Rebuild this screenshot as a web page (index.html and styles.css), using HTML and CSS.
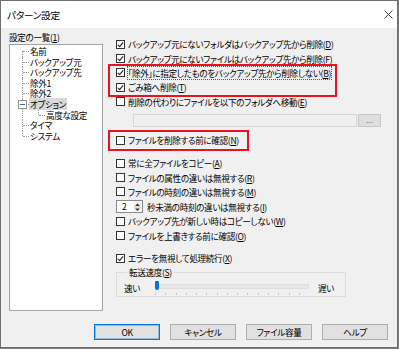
FILE: index.html
```html
<!DOCTYPE html>
<html lang="ja">
<head>
    <meta charset="UTF-8">
    <title>パターン設定</title>
    <link rel="stylesheet" href="styles.css">
</head>
<body>

    <div class="window">
        <div class="titlebar">
            <span class="title">パターン設定</span>
            <svg class="close" width="9" height="9" viewBox="0 0 9 9">
                <path d="M0.5 0.5 L8.5 8.5 M8.5 0.5 L0.5 8.5" stroke="#222" stroke-width="0.9" fill="none"/>
            </svg>
        </div>

        <div class="content">
            <div class="side">
                <div class="side-label">設定の一覧(<u>1</u>)</div>
                <div class="tree">
                    <ul class="tree-root">
                        <li>名前</li>
                        <li>バックアップ元</li>
                        <li>バックアップ先</li>
                        <li>除外1</li>
                        <li>除外2</li>
                        <li class="open">
                            <span class="toggle"></span><span class="selected">オプション</span>
                            <ul>
                                <li>高度な設定</li>
                            </ul>
                        </li>
                        <li>タイマ</li>
                        <li>システム</li>
                    </ul>
                </div>
            </div>

            <div class="options">
                <label class="row"><span class="cb on"></span>バックアップ元にないフォルダはバックアップ先から削除(<u>D</u>)</label>
                <label class="row"><span class="cb on"></span>バックアップ元にないファイルはバックアップ先から削除(<u>F</u>)</label>

                <div class="mark mark-wide">
                    <label class="row"><span class="cb on"></span><span class="focus">「除外」に指定したものをバックアップ先から削除しない(<u>B</u>)</span></label>
                    <label class="row"><span class="cb on"></span>ごみ箱へ削除(<u>T</u>)</label>
                </div>

                <label class="row"><span class="cb"></span>削除の代わりにファイルを以下のフォルダへ移動(<u>E</u>)</label>
                <div class="path-row">
                    <div class="path"></div>
                    <div class="browse">...</div>
                </div>

                <div class="mark mark-short">
                    <label class="row"><span class="cb"></span>ファイルを削除する前に確認(<u>N</u>)</label>
                </div>

                <div class="group-copy">
                    <label class="row"><span class="cb"></span>常に全ファイルをコピー(<u>A</u>)</label>
                    <label class="row"><span class="cb"></span>ファイルの属性の違いは無視する(<u>R</u>)</label>
                    <label class="row"><span class="cb"></span>ファイルの時刻の違いは無視する(<u>M</u>)</label>
                    <div class="row spin-row">
                        <div class="spin">
                            <span class="spin-val">2</span>
                            <span class="spin-btns">
                                <svg width="7" height="12" viewBox="0 0 7 12">
                                    <path d="M1 5 L3.5 2.5 L6 5 Z" fill="#333"/>
                                    <path d="M0 6 H7" stroke="#c8c8c8" stroke-width="1"/>
                                    <path d="M1 7.5 L3.5 10 L6 7.5 Z" fill="#333"/>
                                </svg>
                            </span>
                        </div>
                        <span>秒未満の時刻の違いは無視する(<u>I</u>)</span>
                    </div>
                    <label class="row"><span class="cb"></span>バックアップ先が新しい時はコピーしない(<u>W</u>)</label>
                    <label class="row"><span class="cb"></span>ファイルを上書きする前に確認(<u>O</u>)</label>
                </div>

                <label class="row error-row"><span class="cb on"></span>エラーを無視して処理続行(<u>X</u>)</label>

                <fieldset class="speed">
                    <legend>転送速度(<u>S</u>)</legend>
                    <div class="speed-row">
                        <span class="speed-end">速い</span>
                        <div class="slider">
                            <div class="track"></div>
                            <div class="thumb"></div>
                            <div class="ticks"></div>
                        </div>
                        <span class="speed-end">遅い</span>
                    </div>
                </fieldset>
            </div>
        </div>

        <div class="buttons">
            <button class="btn default">OK</button>
            <button class="btn">キャンセル</button>
            <button class="btn">ファイル容量</button>
            <button class="btn">ヘルプ</button>
        </div>
    </div>

</body>
</html>
```

FILE: styles.css
```css
body {
    margin: 0;
    background-color: #7a7a7a;
    font-family: "Noto Sans CJK JP", "Noto Sans", sans-serif;
    font-size: 8.6px;
    letter-spacing: -0.35px;
    font-feature-settings: "palt";
    color: #000;
}

u {
    text-decoration-thickness: 1px;
    text-underline-offset: 1px;
}

.window {
    width: 398px;
    height: 348px;
    box-sizing: border-box;
    border: 1px solid #6f6f6f;
    background-color: #f0f0f0;
    display: flex;
    flex-direction: column;
}

.titlebar {
    height: 27px;
    background-color: #fff;
    display: flex;
    align-items: center;
    justify-content: space-between;
    padding: 0 4px 0 6px;
    flex: none;
}

.title {
    font-size: 9.6px;
    letter-spacing: -0.2px;
}

.content {
    display: flex;
    gap: 13px;
    padding: 3px 0 0 8px;
}

/* left tree */
.side {
    width: 94px;
    flex: none;
}

.side-label {
    height: 12px;
    line-height: 12px;
    margin-bottom: 1px;
}

.tree {
    height: 267px;
    box-sizing: border-box;
    border: 1px solid #a3a3a3;
    background-color: #fff;
    padding-top: 1px;
}

.tree ul {
    list-style: none;
    margin: 0;
    padding: 0 0 0 12px;
}

.tree li ul {
    padding-left: 8px;
}

.tree li {
    position: relative;
    padding-left: 8px;
    line-height: 10.6px;
    white-space: nowrap;
}

.tree li::before {
    content: "";
    position: absolute;
    left: 0;
    top: 0;
    height: 100%;
    border-left: 1px dotted #9a9a9a;
}

.tree-root > li:first-child::before {
    top: 5px;
    height: calc(100% - 5px);
}

.tree li:last-child::before {
    height: 5.5px;
}

.tree li::after {
    content: "";
    position: absolute;
    left: 1px;
    top: 5px;
    width: 6px;
    border-top: 1px dotted #9a9a9a;
}

.toggle {
    position: absolute;
    left: -4px;
    top: 1px;
    width: 9px;
    height: 9px;
    box-sizing: border-box;
    border: 1px solid #919191;
    background-color: #fff;
    z-index: 1;
}

.toggle::after {
    content: "";
    position: absolute;
    left: 1px;
    right: 1px;
    top: 3px;
    border-top: 1px solid #3c6ea8;
}

.selected {
    background-color: #d9d9d9;
    padding: 0 1px;
    margin-left: -1px;
}

/* right options */
.options {
    display: flex;
    flex-direction: column;
    padding-top: 6px;
    width: 272px;
}

.row {
    display: flex;
    align-items: center;
    height: 14.4px;
    white-space: nowrap;
}

.cb {
    width: 9px;
    height: 9px;
    box-sizing: border-box;
    border: 1px solid #333;
    background-color: #fff;
    margin-right: 3px;
    flex: none;
    position: relative;
}

.cb.on::after {
    content: "";
    position: absolute;
    left: 2px;
    top: 0;
    width: 2px;
    height: 5px;
    border: solid #1a1a1a;
    border-width: 0 1px 1px 0;
    transform: rotate(40deg);
}

.focus {
    outline: 1px dotted #555;
    outline-offset: 0;
}

.mark {
    border: 2px solid #e8141c;
    margin: -2px 0 -2px -8px;
    padding-left: 6px;
    box-sizing: border-box;
}

.mark-wide {
    width: 229px;
}

.mark-short {
    width: 141px;
    margin-top: 3px;
    margin-bottom: 0;
}

.mark-short .row {
    height: 17px;
}

.path-row {
    display: flex;
    gap: 1px;
    height: 13px;
    margin: 5px 0 0 17px;
}

.path {
    width: 224px;
    box-sizing: border-box;
    border: 1px solid #d6d6d6;
    background-color: #f0f0f0;
}

.browse {
    width: 23px;
    box-sizing: border-box;
    border: 1px solid #c8c8c8;
    background-color: #dedede;
    color: #8c8c8c;
    text-align: center;
    line-height: 9px;
    letter-spacing: 0;
}

.group-copy {
    margin-top: 5px;
}

.spin-row {
    height: 15px;
}

.spin {
    display: flex;
    width: 27px;
    height: 13px;
    box-sizing: border-box;
    border: 1px solid #8a8a8a;
    background-color: #fff;
    margin-right: 4px;
}

.spin-val {
    flex: 1;
    padding-left: 5px;
    line-height: 11px;
}

.spin-btns {
    width: 9px;
    display: flex;
    align-items: center;
    justify-content: center;
    background-color: #f3f3f3;
}

.error-row {
    margin-top: 8px;
}

.speed {
    width: 230px;
    height: 30px;
    box-sizing: border-box;
    margin: 2px 0 0;
    padding: 0 0 0 7px;
    border: 1px solid #dcdcdc;
}

.speed legend {
    padding: 0 2px;
    margin-left: 3px;
    line-height: 11px;
}

.speed-row {
    display: flex;
    align-items: center;
    height: 20px;
}

.speed-end {
    width: 16px;
}

.slider {
    position: relative;
    width: 154px;
    height: 14px;
    margin: 0 9px 0 15px;
}

.track {
    margin-top: 3px;
    height: 3px;
    background-color: #e7e7e7;
    border: 1px solid #dedede;
}

.thumb {
    position: absolute;
    left: 0;
    top: 0;
    width: 4px;
    height: 9px;
    background-color: #0078d7;
    border-radius: 1px 1px 2px 2px;
}

.ticks {
    margin-top: 4px;
    height: 2px;
    background: repeating-linear-gradient(to right, #c4c4c4 0 1px, transparent 1px 10.27px);
}

/* bottom buttons */
.buttons {
    margin-top: auto;
    display: flex;
    justify-content: flex-end;
    gap: 10px;
    padding: 0 9px 7px 0;
}

.btn {
    width: 66px;
    height: 16px;
    box-sizing: border-box;
    border: 1px solid #adadad;
    background-color: #e1e1e1;
    font-family: inherit;
    font-size: 8.6px;
    letter-spacing: -0.35px;
    font-feature-settings: "palt";
    padding: 0;
    line-height: 14px;
    color: #000;
}

.btn.default {
    border-color: #0078d7;
    box-shadow: inset 0 0 0 1px rgba(0, 120, 215, 0.35);
}
```
